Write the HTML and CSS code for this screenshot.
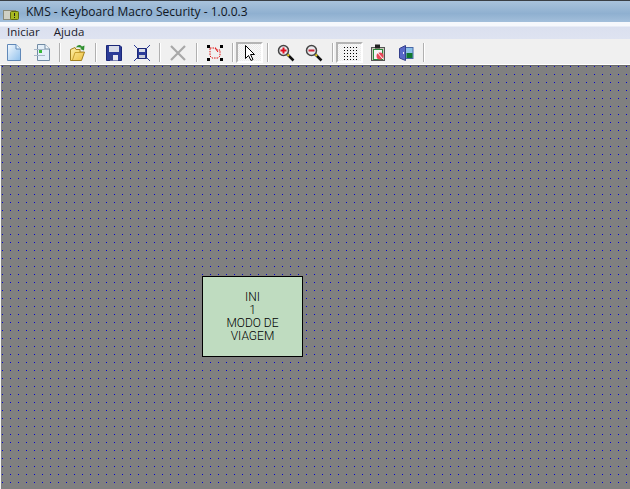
FILE: index.html
```html
<!DOCTYPE html>
<html lang="pt">
<head>
  <meta charset="UTF-8" />
  <title>KMS - Keyboard Macro Security</title>
  <link rel="stylesheet" href="styles.css">
</head>
<body>
  <div class="window">
    <div class="titlebar">
      <svg class="appicon" width="16" height="14" viewBox="0 0 16 14">
        <rect x=".5" y="3.500" width="12" height="9" fill="#d0d0c4" stroke="#8a8a78"/>
        <rect x="7.500" y="4.500" width="8" height="8" rx="1" fill="#a8b820" stroke="#606a10"/>
        <rect x="11" y="6" width="1" height="3" fill="#222"/>
        <rect x="11" y="10" width="1" height="1" fill="#222"/>
      </svg>
      <span class="title">KMS - Keyboard Macro Security - 1.0.0.3</span>
    </div>
    <div class="menubar">
      <span>Iniciar</span>
      <span>Ajuda</span>
    </div>
    <div class="toolbar">
      <svg width="0" height="0" class="defs">
        <defs>
          <linearGradient id="paper" x1="0" y1="0" x2="1" y2="1">
            <stop offset="0" stop-color="#f4f9fe"/>
            <stop offset="1" stop-color="#8fc0ec"/>
          </linearGradient>
          <linearGradient id="folder" x1="0" y1="0" x2="1" y2="1">
            <stop offset="0" stop-color="#fdf0a8"/>
            <stop offset="1" stop-color="#eec040"/>
          </linearGradient>
        </defs>
      </svg>
      <button class="tool">
        <svg width="16" height="18" viewBox="0 0 16 18"><path d="M1.500 .5H10L14.500 5V16.500H1.500Z" fill="url(#paper)" stroke="#6088b8"/><path d="M10 .5V5H14.500" fill="#e8f4fc" stroke="#6088b8"/></svg>
      </button>
      <button class="tool">
        <svg width="16" height="18" viewBox="0 0 16 18"><path d="M3.500 .5H11L15.500 5V16.500H3.500Z" fill="#e4eff8" stroke="#708aa4"/><path d="M11 .5V5H15.500" fill="#f4f9fd" stroke="#708aa4"/><path d="M0 5.500H11M0 11.500H11" stroke="#a8b8c8"/><rect x="5" y="6" width="3" height="3" fill="#38b838"/></svg>
      </button>
      <i class="sep"></i>
      <button class="tool">
        <svg width="16" height="18" viewBox="0 0 16 18"><path d="M.5 16.500V5.500L5 3.500L6 5.500H10V8H14.500L11.500 16.500Z" fill="url(#folder)" stroke="#a08020"/><path d="M2.500 16L5 8.500H14" fill="none" stroke="#c8a030"/><path d="M6 3.500C8 .5 10 .5 12 2.500L14.500 1.500L14 6.500L10 5L11.500 4C10 3 8 3 6 3.500Z" fill="#309030"/></svg>
      </button>
      <i class="sep"></i>
      <button class="tool">
        <svg width="16" height="16" viewBox="0 0 16 16"><path d="M.5 .5H14L15.500 2V15.500H.5Z" fill="#2c3c98" stroke="#1c2878"/><rect x="3" y="1" width="10" height="6" fill="#d8dce8"/><rect x="4" y="10" width="8" height="5.500" fill="#e8e8f0"/><rect x="4" y="10" width="3" height="5.500" fill="#34408c"/></svg>
      </button>
      <button class="tool">
        <svg width="16" height="16" viewBox="0 0 16 16"><path d="M3.500 3.500H12.500V13.500H3.500Z" fill="#2c3c98" stroke="#1c2878"/><rect x="5" y="4" width="6" height="3" fill="#d8dce8"/><rect x="5" y="10" width="6" height="3" fill="#c8ccd8"/><path d="M0 0L3 3M16 0L13 3M0 16L3 13M16 16L13 13" stroke="#2c3c98"/></svg>
      </button>
      <i class="sep"></i>
      <button class="tool">
        <svg width="16" height="16" viewBox="0 0 16 16"><path d="M1 1L15 15M15 1L1 15" stroke="#a8a8a8" stroke-width="2.200"/></svg>
      </button>
      <i class="sep wide"></i>
      <button class="tool">
        <svg width="16" height="16" viewBox="0 0 16 16"><path d="M3 3H9L10 5H13V11L11 13H5L3 11V6Z" fill="none" stroke="#e01010" stroke-dasharray="1.500 1"/><path d="M8 3L11 7" stroke="#e01010"/><rect width="3" height="3"/><rect x="13" width="3" height="3"/><rect y="13" width="3" height="3"/><rect x="13" y="13" width="3" height="3"/></svg>
      </button>
      <i class="sep"></i>
      <button class="tool active">
        <svg width="16" height="18" viewBox="0 0 16 18"><path d="M3.500 1.500V14.500L6.500 11.500L9 16.500L11 15.500L8.500 10.500H12.500Z" fill="#fff" stroke="#000"/></svg>
      </button>
      <i class="sep"></i>
      <button class="tool">
        <svg width="18" height="18" viewBox="0 0 18 18"><path d="M10 10L16.500 16.500" stroke="#111" stroke-width="2.500"/><path d="M10 10L12 12" stroke="#e8d020" stroke-width="2"/><circle cx="6.500" cy="6.500" r="5" fill="#e8e8ec" stroke="#444" stroke-width="1.500"/><path d="M3.500 6.500H9.500M6.500 3.500V9.500" stroke="#e01020" stroke-width="2"/></svg>
      </button>
      <button class="tool">
        <svg width="18" height="18" viewBox="0 0 18 18"><path d="M10 10L16.500 16.500" stroke="#111" stroke-width="2.500"/><path d="M10 10L12 12" stroke="#e8d020" stroke-width="2"/><circle cx="6.500" cy="6.500" r="5" fill="#e8e8ec" stroke="#444" stroke-width="1.500"/><path d="M3.500 6.500H9.500" stroke="#d02838" stroke-width="2"/></svg>
      </button>
      <i class="sep wide"></i>
      <button class="tool active">
        <svg width="14" height="14" viewBox="0 0 14 14"><path d="M1 1h1v1h-1zM4 1h1v1h-1zM7 1h1v1h-1zM10 1h1v1h-1zM13 1h1v1h-1zM1 4h1v1h-1zM4 4h1v1h-1zM7 4h1v1h-1zM10 4h1v1h-1zM13 4h1v1h-1zM1 7h1v1h-1zM4 7h1v1h-1zM7 7h1v1h-1zM10 7h1v1h-1zM13 7h1v1h-1zM1 10h1v1h-1zM4 10h1v1h-1zM7 10h1v1h-1zM10 10h1v1h-1zM13 10h1v1h-1zM1 13h1v1h-1zM4 13h1v1h-1zM7 13h1v1h-1zM10 13h1v1h-1zM13 13h1v1h-1z"/></svg>
      </button>
      <button class="tool">
        <svg width="16" height="18" viewBox="0 0 16 18"><rect x="1.500" y="3.500" width="13" height="13" fill="#c8c8b8" stroke="#555"/><rect x="3.500" y="5.500" width="9" height="10" fill="#f4f4f4" stroke="#2a8a3a"/><rect x="5" y=".5" width="5" height="4" fill="#222"/><circle cx="10" cy="12" r="3.500" fill="#e84858"/><path d="M7 8L13 15" stroke="#fff"/></svg>
      </button>
      <button class="tool">
        <svg width="16" height="18" viewBox="0 0 16 18"><rect x="7" y="3.500" width="8" height="11" fill="#8cc0e8" stroke="#4868a8"/><rect x="8.500" y="9" width="6" height="5" fill="#107830"/><path d="M1.500 4.500L7.500 1.500V16.500L1.500 14Z" fill="#5868c8" stroke="#34408c"/><rect x="5" y="8" width="1" height="2" fill="#e8e8f8"/></svg>
      </button>
      <i class="sep"></i>
    </div>
    <div class="canvas">
      <div class="node">INI<br>1<br>MODO DE<br>VIAGEM</div>
    </div>
  </div>
</body>
</html>
```

FILE: styles.css
```css
html, body { margin: 0; height: 100%; overflow: hidden; }
body { font-family: "Liberation Sans", Arial, sans-serif; font-size: 12px; color: #111; }
.window { display: flex; flex-direction: column; height: 489px; width: 630px; }

.titlebar { box-sizing: border-box; height: 22px; display: flex; align-items: center; gap: 7px; padding-left: 3px; border-top: 1px solid #3a3f45; background: linear-gradient(#a9c3dc, #8fb0d0 60%, #a3bfdb); }
.title { font-family: "Open Sans", sans-serif; font-size: 12px; color: #10161e; }
.appicon { flex: none; margin-top: 5px; }

.menubar { box-sizing: border-box; height: 17px; display: flex; gap: 14px; padding: 1px 0 0 7px; align-items: center; background: linear-gradient(#f6f8fc 0, #f6f8fc 4px, #dbe0ef 5px, #dee3f1); font-family: "Open Sans", sans-serif; font-size: 11.5px; color: #1a1a2a; }

.toolbar { box-sizing: border-box; height: 26px; display: flex; align-items: center; padding-top: 2px; background: #f0f0f0; border-bottom: 1px solid #fff; }
.defs { position: absolute; }
.tool { width: 22px; height: 22px; padding: 0; margin: 0 3px; border: 0; background: none; display: flex; align-items: center; justify-content: center; }
.tool.active { box-sizing: border-box; width: 27px; height: 21px; margin: 0 1px 0 -1px; border: 2px solid; border-color: #b4b4b4 #fff #fff #b4b4b4; background: repeating-conic-gradient(#f8f8f8 0 25%, #ececec 0 50%) 0 0 / 2px 2px; }
.sep { box-sizing: border-box; width: 2px; height: 19px; margin: 0 3px; background: #b0b0b0; border-right: 1px solid #fff; }
.sep.wide { margin-left: 4px; }

.canvas { flex: 1; display: flex; padding: 210px 0 0 201px; border-top: 1px solid #6a6a6a; border-left: 1px solid #f0f0f0; background-color: #808080; background-image: url("data:image/svg+xml,%3Csvg xmlns='http://www.w3.org/2000/svg' width='8' height='8'%3E%3Crect width='1' height='1' fill='%230000d0'/%3E%3C/svg%3E"); background-position: 1px 0; }
.node { width: 99px; height: 79px; display: flex; flex-direction: column; justify-content: center; text-align: center; border: 1px solid #000; background: #bfdcc0; font-family: Roboto, sans-serif; font-weight: 300; font-size: 12px; line-height: 13px; color: #000; }
```
